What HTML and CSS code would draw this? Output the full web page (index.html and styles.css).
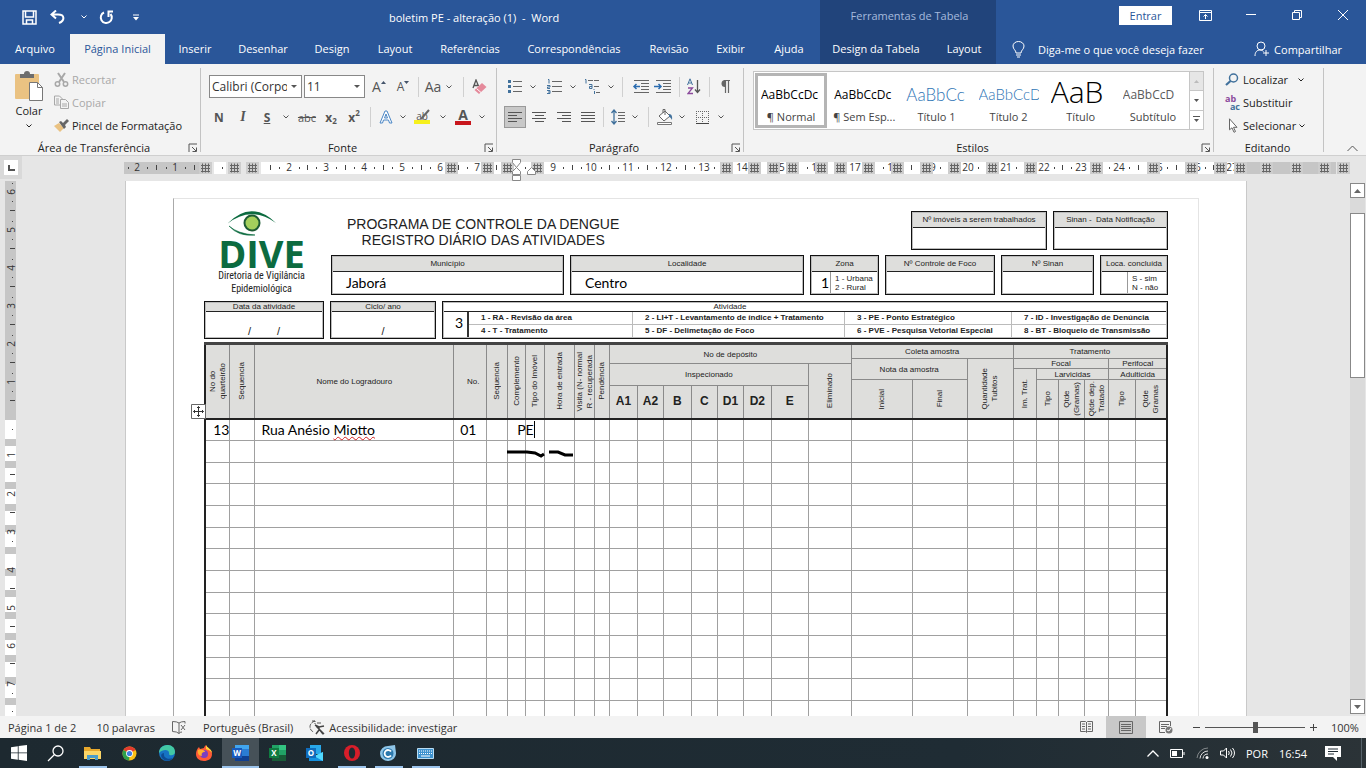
FILE: index.html
```html
<!DOCTYPE html>
<html lang="pt-BR">
<head>
    <meta charset="UTF-8">
    <meta name="viewport" content="width=device-width, initial-scale=1.0">
    <title>boletim PE - alteração (1) - Word</title>
    <link rel="stylesheet" href="styles.css">
</head>
<body>
    <svg class="defs" aria-hidden="true">
        <symbol id="chev" viewBox="0 0 6 4"><path d="M.5.5 3 3 5.5.5" fill="none" stroke="currentColor"/></symbol>
        <symbol id="launch" viewBox="0 0 10 10"><path d="M1 9V1h8M4 4l4 4M8.5 4.5v4h-4" fill="none" stroke="#555"/></symbol>
    </svg>

    <header class="titlebar">
        <div class="main-side">
            <div class="title-row">
                <div class="quick">
                    <button aria-label="Salvar"><svg width="15" height="15" viewBox="0 0 15 15"><path d="M1 1h13v13H1zM3.500 1v6h8V1M4.500 14v-4h6v4" fill="none" stroke="#fff" stroke-width="1.500"/></svg></button>
                    <button aria-label="Desfazer"><svg width="16" height="14" viewBox="0 0 16 14"><path d="M6 .5 1.500 4.500 6 8.500M2 4.500h6c7 0 7 6 1 8.500" fill="none" stroke="#fff" stroke-width="2"/></svg></button>
                    <button aria-label="Lista desfazer"><svg width="6" height="4"><use href="#chev"/></svg></button>
                    <button aria-label="Repetir"><svg width="15" height="15" viewBox="0 0 15 15"><path d="M5 2.500a5.500 5.500 0 1 0 6.500 1.500M9.500 7V1.500H14" fill="none" stroke="#fff" stroke-width="2"/></svg></button>
                    <button aria-label="Personalizar"><svg width="6" height="7" viewBox="0 0 6 7"><path d="M0 1h6" stroke="#fff"/><path d="M0 3h6L3 6.500z" fill="#fff"/></svg></button>
                </div>
                <span class="doc-title">boletim PE - alteração (1) &nbsp;- &nbsp;Word</span>
            </div>
            <nav class="tabs">
                <a href="#">Arquivo</a>
                <a href="#" class="active">Página Inicial</a>
                <a href="#">Inserir</a>
                <a href="#">Desenhar</a>
                <a href="#">Design</a>
                <a href="#">Layout</a>
                <a href="#">Referências</a>
                <a href="#">Correspondências</a>
                <a href="#">Revisão</a>
                <a href="#">Exibir</a>
                <a href="#">Ajuda</a>
            </nav>
        </div>
        <div class="context-side">
            <div class="context-title">Ferramentas de Tabela</div>
            <nav class="tabs context-tabs">
                <a href="#">Design da Tabela</a>
                <a href="#">Layout</a>
            </nav>
        </div>
        <div class="window-side">
            <div class="window-row">
                <button class="signin">Entrar</button>
                <button class="win" aria-label="Opções da faixa"><svg width="13" height="11" viewBox="0 0 13 11"><path d="M.5.5h12v10H.5zM.5 2.500h12M6.500 9V4.500M4.500 6.500l2-2 2 2" fill="none" stroke="#fff"/></svg></button>
                <button class="win" aria-label="Minimizar"><svg width="10" height="10" viewBox="0 0 10 10"><path d="M0 4.500h10" stroke="#fff"/></svg></button>
                <button class="win" aria-label="Restaurar"><svg width="10" height="10" viewBox="0 0 10 10"><path d="M.5 2.500h7v7h-7zM2.500 2.500v-2h7v7h-2" fill="none" stroke="#fff"/></svg></button>
                <button class="win" aria-label="Fechar"><svg width="10" height="10" viewBox="0 0 10 10"><path d="M0 0l10 10M10 0 0 10" stroke="#fff"/></svg></button>
            </div>
            <div class="tell-row">
                <a href="#" class="tell"><svg width="13" height="17" viewBox="0 0 13 17"><path d="M4 12c0-3-3-3.500-3-7a5.500 4.500 0 0 1 11 0c0 3.500-3 4-3 7zM4 14h5M5 16h3" fill="none" stroke="#fff"/></svg>Diga-me o que você deseja fazer</a>
                <a href="#" class="share"><svg width="16" height="16" viewBox="0 0 16 16"><path d="M1 15c0-4 2-6 5-6 1.500 0 2.500.5 3.500 1.500M12 9v6M9 12h6" fill="none" stroke="#fff"/><circle cx="7" cy="5" r="4" fill="none" stroke="#fff"/></svg>Compartilhar</a>
            </div>
        </div>
    </header>

    <section class="ribbon">
        <div class="group clipboard">
            <div class="group-body clip-body">
                <button class="paste">
                    <svg width="28" height="30" viewBox="0 0 28 30"><rect x="0" y="3" width="24" height="25" rx="1" fill="#eac282"/><path d="M5 7V3h4a3 3 0 0 1 6 0h4v4z" fill="#6d6d6d"/><path d="M14.500 11.500h8l5 5v13h-13z" fill="#fff" stroke="#777"/><path d="M22.500 11.500v5h5" fill="none" stroke="#777"/></svg>
                    <span>Colar</span>
                    <svg width="6" height="4"><use href="#chev"/></svg>
                </button>
                <div class="clip-list">
                    <button disabled><svg width="15" height="15" viewBox="0 0 15 15"><path d="M4 1l6 9M11 1 5 10" stroke="#a8a8a8" stroke-width="2"/><circle cx="3.500" cy="12" r="2.200" fill="none" stroke="#a8a8a8" stroke-width="1.500"/><circle cx="11.500" cy="12" r="2.200" fill="none" stroke="#a8a8a8" stroke-width="1.500"/></svg>Recortar</button>
                    <button disabled><svg width="15" height="15" viewBox="0 0 15 15"><path d="M6 10H.5V1h5l3 3M6.500 4.500h5l3 3v6h-8zM8 9h5M8 11h5M2 4h3M2 6h3M2 8h3" fill="none" stroke="#a8a8a8"/></svg>Copiar</button>
                    <button><svg width="15" height="15" viewBox="0 0 15 15"><path d="M0 8l5-3 5 5-4 4z" fill="#eac282"/><path d="M5 4l2-1 2 2 4-4 2 2-4 4 1 2-2 2z" fill="#666"/></svg>Pincel de Formatação</button>
                </div>
            </div>
            <div class="group-label"><span>Área de Transferência</span><button aria-label="Opções"><svg width="10" height="10"><use href="#launch"/></svg></button></div>
        </div>

        <div class="group font">
            <div class="group-body">
                <div class="tools font-top">
                    <div class="combo"><select aria-label="Fonte"><option>Calibri (Corpo)</option></select></div>
                    <div class="combo"><select aria-label="Tamanho"><option>11</option></select></div>
                    <button class="glyph" aria-label="Aumentar fonte">A<svg width="5" height="3" viewBox="0 0 5 3"><path d="M0 3h5L2.500 0z" fill="#44546a"/></svg></button>
                    <button class="glyph small" aria-label="Diminuir fonte">A<svg width="5" height="3" viewBox="0 0 5 3"><path d="M0 0h5L2.500 3z" fill="#44546a"/></svg></button>
                    <i class="sep"></i>
                    <button class="glyph">Aa</button>
                    <button aria-label="Mais"><svg width="6" height="4"><use href="#chev"/></svg></button>
                    <i class="sep"></i>
                    <button aria-label="Limpar formatação"><svg width="15" height="16" viewBox="0 0 15 16"><path d="M1 9 4 1 6.500 7M2 6.500h4" fill="none" stroke="#555" stroke-width="1.300"/><path d="M2.500 11 10 4l4.500 4-7.500 7z" fill="#e58a9b"/><path d="M4.500 9.500l4.500 4" stroke="#fff"/></svg></button>
                </div>
                <div class="tools font-bottom">
                    <button class="b">N</button>
                    <button class="i">I</button>
                    <button class="b u">S</button>
                    <button aria-label="Mais"><svg width="6" height="4"><use href="#chev"/></svg></button>
                    <button class="strike">abc</button>
                    <button class="b">x<sub>2</sub></button>
                    <button class="b">x<sup>2</sup></button>
                    <i class="sep"></i>
                    <button aria-label="Efeitos"><svg width="14" height="14" viewBox="0 0 14 14"><path d="M1 13 6 1h2l5 12h-2.500l-1-3h-5l-1 3zM5.500 8h3L7 4z" fill="#fff" stroke="#4a86c5"/></svg></button>
                    <button aria-label="Mais"><svg width="6" height="4"><use href="#chev"/></svg></button>
                    <button class="marker" aria-label="Realce">ab<svg width="16" height="17" viewBox="0 0 16 17"><path d="M7 11l8-9" stroke="#666" stroke-width="2"/><path d="M0 12h16v4H0z" fill="#f6f01c"/></svg></button>
                    <button aria-label="Mais"><svg width="6" height="4"><use href="#chev"/></svg></button>
                    <button class="color" aria-label="Cor da fonte">A</button>
                    <button aria-label="Mais"><svg width="6" height="4"><use href="#chev"/></svg></button>
                </div>
            </div>
            <div class="group-label"><span>Fonte</span><button aria-label="Opções"><svg width="10" height="10"><use href="#launch"/></svg></button></div>
        </div>

        <div class="group paragraph">
            <div class="group-body">
                <div class="tools par-top">
                    <button aria-label="Marcadores"><svg width="14" height="15" viewBox="0 0 14 15"><path d="M0 1h3v3H0zM0 6h3v3H0zM0 11h3v3H0z" fill="#41719c"/><path d="M5 2.500h9M5 7.500h9M5 12.500h9" stroke="#666"/></svg></button>
                    <button aria-label="Mais"><svg width="6" height="4"><use href="#chev"/></svg></button>
                    <button aria-label="Numeração"><svg width="15" height="17" viewBox="0 0 15 17"><path d="M1 1.500h1v4M0 7.500h3v1.500H.5v1.500H3M0 12.500h3v3H0M1 14h2" fill="none" stroke="#41719c"/><path d="M5 3.500h10M5 8.500h10M5 13.500h10" stroke="#666"/></svg></button>
                    <button aria-label="Mais"><svg width="6" height="4"><use href="#chev"/></svg></button>
                    <button aria-label="Vários níveis"><svg width="18" height="17" viewBox="0 0 18 17"><path d="M1 1.500h1v4M5 6.500h3v4H5.500v-2H8M10 11v1M10.500 13v3" fill="none" stroke="#41719c"/><path d="M4 2.500h12M10 8.500h6M12 14.500h4" stroke="#666" stroke-dasharray="5 1"/></svg></button>
                    <button aria-label="Mais"><svg width="6" height="4"><use href="#chev"/></svg></button>
                    <i class="sep"></i>
                    <button aria-label="Diminuir recuo"><svg width="17" height="13" viewBox="0 0 17 13"><path d="M2 .5h15M9 3.500h8M9 6.500h8M9 9.500h8M2 12.500h15" stroke="#666"/><path d="M8 6.500H2M4.500 4 2 6.500 4.500 9" fill="none" stroke="#2b6cb0" stroke-width="1.500"/></svg></button>
                    <button aria-label="Aumentar recuo"><svg width="17" height="13" viewBox="0 0 17 13"><path d="M2 .5h15M9 3.500h8M9 6.500h8M9 9.500h8M2 12.500h15" stroke="#666"/><path d="M0 6.500h7M4.500 4 7 6.500 4.500 9" fill="none" stroke="#2b6cb0" stroke-width="1.500"/></svg></button>
                    <i class="sep"></i>
                    <button aria-label="Classificar"><svg width="14" height="17" viewBox="0 0 14 17"><path d="M.5 7 3 .8 5.500 7M1.500 5h3" fill="none" stroke="#41719c"/><path d="M1 10h4.500L1 15.500h5" fill="none" stroke="#8b4a9c" stroke-width="1.300"/><path d="M10.500 2v12M8 11.500l2.500 3 2.500-3" fill="none" stroke="#555" stroke-width="1.300"/></svg></button>
                    <i class="sep"></i>
                    <button aria-label="Mostrar tudo"><svg width="10" height="13" viewBox="0 0 10 13"><path d="M5 0v7a3.500 3.500 0 0 1 0-7z" fill="#666"/><path d="M4 .5h6M5.500 0v13M8.500 0v13" stroke="#666" stroke-width="1.200"/></svg></button>
                </div>
                <div class="tools par-bottom">
                    <button class="pressed" aria-label="Esquerda"><svg width="14" height="11" viewBox="0 0 14 11"><path d="M0 .5h14M0 3.500h9M0 6.500h14M0 9.500h9" stroke="#555"/></svg></button>
                    <button aria-label="Centralizar"><svg width="14" height="11" viewBox="0 0 14 11"><path d="M0 .5h14M3 3.500h9M0 6.500h14M3 9.500h9" stroke="#555"/></svg></button>
                    <button aria-label="Direita"><svg width="14" height="11" viewBox="0 0 14 11"><path d="M0 .5h14M5 3.500h9M0 6.500h14M5 9.500h9" stroke="#555"/></svg></button>
                    <button aria-label="Justificar"><svg width="14" height="11" viewBox="0 0 14 11"><path d="M0 .5h14M0 3.500h14M0 6.500h14M0 9.500h14" stroke="#555"/></svg></button>
                    <i class="sep"></i>
                    <button aria-label="Espaçamento"><svg width="14" height="16" viewBox="0 0 14 16"><path d="M3 1v14M.5 4 3 1l2.500 3M.5 12 3 15l2.500-3" fill="none" stroke="#41719c" stroke-width="1.300"/><path d="M7 3.500h7M7 6.500h7M7 9.500h7M7 12.500h7" stroke="#666"/></svg></button>
                    <button aria-label="Mais"><svg width="6" height="4"><use href="#chev"/></svg></button>
                    <i class="sep"></i>
                    <button aria-label="Sombreamento"><svg width="16" height="16" viewBox="0 0 16 16"><path d="M2 7l6-5 5 5-6 5zM6 4V.5h2V6" fill="#fff" stroke="#666"/><path d="M12 5c3 0 3.500 3 3 6-1-2-2-3-3-3z" fill="#41719c"/><path d="M.5 13.500h14v2H.5z" fill="#fff" stroke="#777"/></svg></button>
                    <button aria-label="Mais"><svg width="6" height="4"><use href="#chev"/></svg></button>
                    <button aria-label="Bordas"><svg width="13" height="13" viewBox="0 0 13 13"><path d="M0 .5h13M0 6.500h13M.5 0v13M6.500 0v13M12.500 0v13" stroke="#666" stroke-dasharray="1 1"/><path d="M0 12.500h13" stroke="#444"/></svg></button>
                    <button aria-label="Mais"><svg width="6" height="4"><use href="#chev"/></svg></button>
                </div>
            </div>
            <div class="group-label"><span>Parágrafo</span><button aria-label="Opções"><svg width="10" height="10"><use href="#launch"/></svg></button></div>
        </div>

        <div class="group styles">
            <div class="group-body">
                <div class="gallery">
                    <button class="style selected"><span class="sample">AaBbCcDc</span><span>¶ Normal</span></button>
                    <button class="style"><span class="sample">AaBbCcDc</span><span>¶ Sem Esp...</span></button>
                    <button class="style"><span class="sample h1">AaBbCc</span><span>Título 1</span></button>
                    <button class="style"><span class="sample h2">AaBbCcD</span><span>Título 2</span></button>
                    <button class="style"><span class="sample big">AaB</span><span>Título</span></button>
                    <button class="style"><span class="sample sub-title">AaBbCcD</span><span>Subtítulo</span></button>
                    <div class="gallery-nav">
                        <button class="off" aria-label="Acima"><svg width="5" height="3" viewBox="0 0 5 3"><path d="M0 3h5L2.500 0z" fill="#bbb"/></svg></button>
                        <button aria-label="Abaixo"><svg width="5" height="3" viewBox="0 0 5 3"><path d="M0 0h5L2.500 3z" fill="#555"/></svg></button>
                        <button aria-label="Mais estilos"><svg width="7" height="7" viewBox="0 0 7 7"><path d="M0 .5h7" stroke="#555"/><path d="M1 3h5L3.500 6z" fill="#555"/></svg></button>
                    </div>
                </div>
            </div>
            <div class="group-label"><span>Estilos</span><button aria-label="Opções"><svg width="10" height="10"><use href="#launch"/></svg></button></div>
        </div>

        <div class="group editing">
            <div class="group-body edit-list">
                <button><svg width="15" height="13" viewBox="0 0 15 13"><circle cx="8.500" cy="5" r="4" fill="none" stroke="#41719c" stroke-width="1.500"/><path d="M5.500 8 1 12" stroke="#41719c" stroke-width="2.200"/></svg>Localizar<svg class="arrow" width="6" height="4"><use href="#chev"/></svg></button>
                <button><span class="replace"><b>ab</b><em>ac</em></span>Substituir</button>
                <button><svg width="15" height="15" viewBox="0 0 15 15"><path d="M4.500.8v11l2.500-2 2 4.500 1.500-.8-2-4.200h3.500z" fill="#fff" stroke="#666"/></svg>Selecionar<svg class="arrow near" width="6" height="4"><use href="#chev"/></svg></button>
            </div>
            <div class="group-label"><span>Editando</span></div>
        </div>
        <button class="collapse" aria-label="Recolher"><svg width="11" height="7" viewBox="0 0 11 7"><path d="M.5 6 5.500 1l5 5" fill="none" stroke="#555"/></svg></button>
    </section>

    <div class="ruler-row">
        <button class="corner" aria-label="Tabulação"><svg width="7" height="6" viewBox="0 0 7 6"><path d="M1 0v5h6" fill="none" stroke="#555" stroke-width="2"/></svg></button>
        <svg id="hruler" width="1344" height="25" viewBox="22 0 1344 25"></svg>
    </div>

    <main class="workspace">
        <svg id="vruler" width="17" height="535" viewBox="0 0 17 535"></svg>
        <div class="canvas">
            <div class="page">
                <div class="form">
                    <div class="form-head">
                        <div class="logo">
                            <svg width="50" height="26" viewBox="0 0 50 26"><path d="M0 13Q24-12 49 12 24-6 0 13z" fill="#0c6b40"/><path d="M2 15q9 8 26 9Q12 26 2 15z" fill="#0c6b40" stroke="#0c6b40" stroke-width=".6"/><circle cx="25" cy="12" r="8.500" fill="#1d5b33"/><circle cx="25" cy="12" r="6.500" fill="#a4d05c"/></svg>
                            <strong>DIVE</strong>
                            <span>Diretoria de Vigilância</span>
                            <span>Epidemiológica</span>
                        </div>
                        <div class="head-right">
                            <div class="head-top">
                                <h1>PROGRAMA DE CONTROLE DA DENGUE<br>REGISTRO DIÁRIO DAS ATIVIDADES</h1>
                                <div class="box"><h2>Nº imóveis a serem trabalhados</h2><p></p></div>
                                <div class="box"><h2>Sinan - &nbsp;Data Notificação</h2><p></p></div>
                            </div>
                            <div class="head-fields">
                                <div class="box"><h2>Município</h2><p class="typed">Jaborá</p></div>
                                <div class="box"><h2>Localidade</h2><p class="typed">Centro</p></div>
                                <div class="box"><h2>Zona</h2><div class="split"><p class="typed">1</p><small>1 - Urbana<br>2 - Rural</small></div></div>
                                <div class="box"><h2>Nº Controle de Foco</h2><p></p></div>
                                <div class="box"><h2>Nº Sinan</h2><p></p></div>
                                <div class="box"><h2>Loca. concluída</h2><div class="split"><p></p><small>S - sim<br>N - não</small></div></div>
                            </div>
                        </div>
                    </div>
                    <div class="head-bottom">
                        <div class="box low"><h2>Data da atividade</h2><p class="slashes"><span>/</span><span>/</span></p></div>
                        <div class="box low"><h2>Ciclo/ ano</h2><p class="slashes"><span>/</span></p></div>
                        <div class="box low activity">
                            <h2>Atividade</h2>
                            <div class="activity-body">
                                <p class="typed">3</p>
                                <ul>
                                    <li>1 - RA - Revisão da área</li>
                                    <li>2 - LI+T - Levantamento de índice + Tratamento</li>
                                    <li>3 - PE - Ponto Estratégico</li>
                                    <li>7 - ID - Investigação de Denúncia</li>
                                    <li>4 - T - Tratamento</li>
                                    <li>5 - DF - Delimetação de Foco</li>
                                    <li>6 - PVE - Pesquisa Vetorial Especial</li>
                                    <li>8 - BT - Bloqueio de Transmissão</li>
                                </ul>
                            </div>
                        </div>
                    </div>

                    <div class="sheet">
                        <svg class="handle" width="15" height="15" viewBox="0 0 15 15"><path d="M.5.5h14v14H.5z" fill="#fff" stroke="#666"/><path d="M7.500 2.500v10M2.500 7.500h10M6 4l1.500-1.500L9 4M6 11l1.500 1.500L9 11M4 6 2.500 7.500 4 9M11 6l1.500 1.500L11 9" fill="none" stroke="#333"/></svg>
                        <table>
                            <colgroup id="cols"></colgroup>
                            <thead>
                                <tr class="r1">
                                    <th rowspan="6"><span class="v">No do<br>quarteirão</span></th>
                                    <th rowspan="6"><span class="v">Sequencia</span></th>
                                    <th rowspan="6">Nome do Logradouro</th>
                                    <th rowspan="6" class="num">No.</th>
                                    <th rowspan="6"><span class="v">Sequencia</span></th>
                                    <th rowspan="6"><span class="v">Complemento</span></th>
                                    <th rowspan="6"><span class="v">Tipo do Imóvel</span></th>
                                    <th rowspan="6"><span class="v">Hora de entrada</span></th>
                                    <th rowspan="6"><span class="v">Visita (N- normal<br>R - recuperada</span></th>
                                    <th rowspan="6"><span class="v">Pendência</span></th>
                                    <th rowspan="2" colspan="8">No de depósito</th>
                                    <th colspan="3">Coleta amostra</th>
                                    <th colspan="6">Tratamento</th>
                                </tr>
                                <tr class="r2">
                                    <th rowspan="3" colspan="2">Nota da amostra</th>
                                    <th rowspan="5"><span class="v">Quantidade<br>Tubitos</span></th>
                                    <th rowspan="2" colspan="4">Focal</th>
                                    <th rowspan="2" colspan="2">Perifocal</th>
                                </tr>
                                <tr class="r3">
                                    <th rowspan="3" colspan="7">Inspecionado</th>
                                    <th rowspan="4"><span class="v">Eliminado</span></th>
                                </tr>
                                <tr class="r4">
                                    <th rowspan="3"><span class="v">Im. Trat.</span></th>
                                    <th colspan="3">Larvicidas</th>
                                    <th colspan="2">Adulticida</th>
                                </tr>
                                <tr class="r5">
                                    <th rowspan="2"><span class="v">Inicial</span></th>
                                    <th rowspan="2"><span class="v">Final</span></th>
                                    <th rowspan="2"><span class="v">Tipo</span></th>
                                    <th rowspan="2"><span class="v">Qtde<br>(Gramas)</span></th>
                                    <th rowspan="2"><span class="v">Qtde dep.<br>Tratado</span></th>
                                    <th rowspan="2"><span class="v">Tipo</span></th>
                                    <th rowspan="2"><span class="v">Qtde<br>Gramas</span></th>
                                </tr>
                                <tr class="r6">
                                    <th>A1</th><th>A2</th><th>B</th><th>C</th><th>D1</th><th>D2</th><th>E</th>
                                </tr>
                            </thead>
                            <tbody id="rows">
                                <tr>
                                    <td class="right">13</td><td></td>
                                    <td>Rua Anésio <span class="typo">Miotto</span></td>
                                    <td>01</td><td></td>
                                    <td class="current"><span class="caret">PE</span>
                                        <svg class="ink" width="70" height="10" viewBox="0 0 70 10"><path d="M1 3h20l8 1 6 3 3-2M43 3h9l7 3h8" fill="none" stroke="#000" stroke-width="3"/></svg>
                                    </td>
                                </tr>
                            </tbody>
                        </table>
                    </div>
                </div>
            </div>
        </div>
        <div class="scroll">
            <button aria-label="Rolar acima"><svg width="7" height="4" viewBox="0 0 7 4"><path d="M0 4h7L3.500 0z" fill="#666"/></svg></button>
            <div class="track"><div class="thumb"></div></div>
            <button aria-label="Rolar abaixo"><svg width="7" height="4" viewBox="0 0 7 4"><path d="M0 0h7L3.500 4z" fill="#666"/></svg></button>
        </div>
    </main>

    <footer class="status">
        <span class="pages">Página 1 de 2</span>
        <span class="words">10 palavras</span>
        <svg class="proof" width="15" height="13" viewBox="0 0 15 13"><path d="M7 12.500V2Q5 .5.5.5v10q4.500 0 6.500 2 1-1.500 3-1.500M7 2Q9 .5 13 .5v2M9 4l4 5M13 4 9 9" fill="none" stroke="#666"/></svg>
        <span class="lang">Português (Brasil)</span>
        <svg width="17" height="15" viewBox="0 0 17 15"><path d="M6 1C-1 3 0 11 5 12M3 1h3v3M8 3h4" fill="none" stroke="#555" stroke-dasharray="4 1"/><path d="M6 5l4 2 5-1M10 7v3l-3 4M10 9l4 5M7 6l8 8" fill="none" stroke="#444" stroke-width="1.500"/></svg>
        <span class="access">Acessibilidade: investigar</span>
        <div class="views">
            <button aria-label="Leitura"><svg width="13" height="12" viewBox="0 0 13 12"><path d="M.5.5h5l1 1 1-1h5v10h-5l-1 1-1-1h-5zM6.500 1v10M2 3h3M2 5.500h3M2 8h3M8 3h3M8 5.500h3M8 8h3" fill="none" stroke="#666"/></svg></button>
            <button class="on" aria-label="Impressão"><svg width="14" height="13" viewBox="0 0 14 13"><path d="M.5.5h13v12H.5zM2 3.500h10M2 5.500h10M2 7.500h10M2 9.500h10" fill="none" stroke="#666"/></svg></button>
            <button aria-label="Web"><svg width="14" height="13" viewBox="0 0 14 13"><path d="M6 11.500H.5v-11h11V5M2 3.500h8M2 5.500h6M2 7.500h4" fill="none" stroke="#666"/><circle cx="10" cy="9" r="3.500" fill="#777"/><path d="M8 9l2 1 2-3" stroke="#fff" fill="none"/></svg></button>
        </div>
        <button class="step" aria-label="Menos zoom"><svg width="9" height="9" viewBox="0 0 9 9"><path d="M1 4.500h7" stroke="#444"/></svg></button>
        <input type="range" min="0" max="100" value="50" aria-label="Zoom">
        <button class="step" aria-label="Mais zoom"><svg width="9" height="9" viewBox="0 0 9 9"><path d="M1 4.500h7M4.500 1v7" stroke="#444"/></svg></button>
        <span class="percent">100%</span>
    </footer>

    <footer class="taskbar">
        <button aria-label="Iniciar"><svg width="16" height="16" viewBox="0 0 16 16"><path d="M0 2.200 6.800 1.200v6.300H0zM7.600 1.100 16 0v7.500H7.600zM0 8.300h6.800v6.400L0 13.700zM7.600 8.300H16V16l-8.400-1.200z" fill="#fff"/></svg></button>
        <button aria-label="Pesquisar"><svg width="17" height="17" viewBox="0 0 17 17"><circle cx="11" cy="6" r="5" fill="none" stroke="#fff" stroke-width="1.300"/><path d="M7.500 9.500 1 16" stroke="#fff" stroke-width="1.300"/></svg></button>
        <button class="open" aria-label="Explorador"><svg width="17" height="15" viewBox="0 0 17 15"><path d="M0 1h6l1 2h9v10H0z" fill="#e8a92c"/><path d="M0 5h17v8H0z" fill="#fbd667"/><path d="M3 14V9h11v5h-3v-2H6v2z" fill="#4b9cc9"/></svg></button>
        <button aria-label="Chrome"><svg width="15" height="15" viewBox="0 0 15 15"><circle cx="7.500" cy="7.500" r="7" fill="#fbc116"/><path d="M7.500 7.500 1.400 4A7 7 0 0 1 13.600 4z" fill="#e33b2e"/><path d="M7.500 7.500 1.400 4a7 7 0 0 0 5.800 10.500z" fill="#2ea04c"/><circle cx="7.500" cy="7.500" r="3.400" fill="#fff"/><circle cx="7.500" cy="7.500" r="2.600" fill="#3f80e0"/></svg></button>
        <button aria-label="Edge"><svg width="16" height="16" viewBox="0 0 16 16"><circle cx="8" cy="8" r="8" fill="#1673c4"/><path d="M0 8C0-2 16-3 16 7c0 4-6 4-6 2 1-4-5-6-10-1z" fill="#43c8a4"/><path d="M5 8c-1 5 4 7 9 5-3 4-9 3-11 0S3 8 5 8z" fill="#0d4c94"/></svg></button>
        <button aria-label="Firefox"><svg width="16" height="16" viewBox="0 0 16 16"><path d="M8 16C3 16 0 13 0 9c0-3 1-5 3-7l1 2 4-1c0-1 1-2 2-3 1 3 6 4 6 9s-4 7-8 7z" fill="#ff5a36"/><path d="M10 0c1 3 6 4 6 8-2-3-4-3-6-4z" fill="#ffd43c"/><circle cx="8" cy="9" r="4" fill="#7b3fc0"/><path d="M2 5c3-1 7 0 7 2-3 0-4 2-3 4-3 0-5-3-4-6z" fill="#ffb02e"/></svg></button>
        <button class="open focus" aria-label="Word"><svg width="17" height="16" viewBox="0 0 17 16"><path d="M3 0h14v16H3z" fill="#2b7cd3"/><path d="M3 0h14v4H3z" fill="#41a5ee"/><path d="M3 11h14v5H3z" fill="#103f91"/><path d="M0 3h10v10H0z" fill="#185abd"/><text x="5" y="11" class="app">W</text></svg></button>
        <button aria-label="Excel"><svg width="17" height="16" viewBox="0 0 17 16"><path d="M3 0h14v16H3z" fill="#21a366"/><path d="M10 0h7v5h-7z" fill="#33c481"/><path d="M3 10h14v6H3z" fill="#185c37"/><path d="M0 3h10v10H0z" fill="#107c41"/><text x="5" y="11" class="app">X</text></svg></button>
        <button aria-label="Outlook"><svg width="17" height="16" viewBox="0 0 17 16"><path d="M4 0h11v9H4z" fill="#28a8ea"/><path d="M3 7l7 4 7-4v9H3z" fill="#1490df"/><path d="M17 7v9L8 11z" fill="#50d9ff"/><path d="M0 3h10v10H0z" fill="#0f6cbd"/><text x="5" y="11" class="app">O</text></svg></button>
        <button class="open" aria-label="Opera"><svg width="16" height="16" viewBox="0 0 16 16"><circle cx="8" cy="8" r="8" fill="#d81e2a"/><ellipse cx="8" cy="8" rx="3.200" ry="5.500" fill="#1f2b33"/></svg></button>
        <button class="open" aria-label="Navegador"><svg width="17" height="16" viewBox="0 0 17 16"><path d="M8 1 15 0l1 8a8 7.500 0 1 1-8-7z" fill="#8ec5e8"/><circle cx="8" cy="8.500" r="5.500" fill="#2d79ad"/><path d="M11 6.500a3.500 3.500 0 1 0 0 4" fill="none" stroke="#fff" stroke-width="1.800"/></svg></button>
        <button class="open" aria-label="Teclado"><svg width="17" height="11" viewBox="0 0 17 11"><path d="M.5.5h16v10H.5z" fill="#3f93cf" stroke="#b9ddf3"/><path d="M2 3h13M2 5.500h13" stroke="#fff" stroke-dasharray="1 1"/><path d="M4 8h9" stroke="#fff"/></svg></button>
        <div class="tray">
            <svg width="12" height="7" viewBox="0 0 12 7"><path d="M.5 6.500 6 1l5.500 5.500" fill="none" stroke="#fff" stroke-width="1.300"/></svg>
            <svg width="15" height="9" viewBox="0 0 15 9"><path d="M.5.5h12v8H.5zM14 3v3" fill="none" stroke="#fff"/><path d="M2 2h5v5H2z" fill="#fff"/></svg>
            <svg width="13" height="12" viewBox="0 0 13 12"><g fill="none" stroke="#ddd"><path d="M1 11A11 11 0 0 1 12 1" opacity=".5"/><path d="M4 11.500A8 8 0 0 1 12 4M7 11.500A5 5 0 0 1 12 7"/></g><circle cx="11" cy="10.500" r="1.500" fill="#fff"/></svg>
            <svg width="15" height="12" viewBox="0 0 15 12"><path d="M.5 4h3l3-3v10l-3-3h-3zM8.500 4q1.500 2 0 4M10.500 2.500q3 3.500 0 7M12.500 1q4 5 0 10" fill="none" stroke="#fff"/></svg>
            <span>POR</span>
            <span class="clock">16:54</span>
            <svg width="16" height="15" viewBox="0 0 16 15"><path d="M0 0h16v11h-4v4l-4-4H0z" fill="#fff"/><path d="M3 3h10M3 5.500h10M3 8h6" stroke="#1f2b33"/></svg>
        </div>
    </footer>

    <script src="script.js"></script>
</body>
</html>
```
FILE: styles.css
```css
* {
    box-sizing: border-box;
}

body {
    margin: 0;
    height: 100vh;
    display: flex;
    flex-direction: column;
    overflow: hidden;
    font-family: "Open Sans", "Noto Sans", sans-serif;
    font-size: 11px;
    color: #333;
    background: #e6e6e6;
}

button {
    font: inherit;
    color: inherit;
    background: none;
    border: 0;
    padding: 0;
    display: flex;
    align-items: center;
    justify-content: center;
}

a {
    color: inherit;
    text-decoration: none;
}

svg {
    flex: none;
    display: block;
}

.defs {
    position: absolute;
    width: 0;
    height: 0;
}

/* title bar */
.titlebar {
    display: flex;
    height: 64px;
    flex: none;
    background: #2a5699;
    color: #fff;
}

.main-side {
    flex: 0 0 820px;
}

.title-row {
    height: 34px;
    display: flex;
    align-items: center;
}

.quick {
    display: grid;
    grid-template-columns: 22px 36px 16px 28px 32px;
    padding-left: 18px;
    width: 389px;
}

.doc-title {
    white-space: nowrap;
}

.tabs {
    height: 30px;
    display: grid;
    grid-template-columns: 70px 95px 60px 76px 62px 64px 86px 122px 68px 55px 62px;
    line-height: 30px;
    text-align: center;
}

.tabs .active {
    background: #f3f3f3;
    color: #2a5699;
}

.context-side {
    flex: 0 0 176px;
    background: #21447b;
}

.context-title {
    height: 34px;
    line-height: 32px;
    text-align: center;
    color: #a6bbdd;
    padding-left: 3px;
}

.context-tabs {
    grid-template-columns: 112px 64px;
}

.window-side {
    flex: 1;
}

.window-row {
    height: 34px;
    display: flex;
    justify-content: flex-end;
}

.window-row .win {
    width: 46px;
    height: 30px;
}

.window-row .signin {
    width: 53px;
    height: 19px;
    margin: 6px 10px 0 0;
    background: #fff;
    color: #2a5699;
}

.tell-row {
    height: 30px;
    display: flex;
    align-items: center;
    justify-content: space-between;
    padding: 0 24px 0 16px;
}

.tell, .share {
    display: flex;
    align-items: center;
    gap: 13px;
}

.share {
    gap: 4px;
}

/* ribbon */
.ribbon {
    display: flex;
    flex: none;
    height: 92px;
    background: #f3f3f3;
    border-bottom: 1px solid #cfcfcf;
}

.group {
    display: flex;
    flex-direction: column;
    height: 84px;
    margin-top: 4px;
    border-right: 1px solid #c3c3c3;
    color: #222;
}

.group-body {
    flex: 1;
}

.group-label {
    height: 8px;
    display: flex;
    align-items: center;
    text-align: center;
    padding-right: 2px;
}

.group-label span {
    flex: 1;
    line-height: 8px;
}

.clipboard {
    width: 201px;
}

.font {
    width: 296px;
}

.paragraph {
    width: 247px;
}

.styles {
    width: 470px;
}

.editing {
    width: 110px;
}

.clip-body {
    display: flex;
}

.paste {
    width: 58px;
    flex-direction: column;
    justify-content: flex-start;
    padding-top: 3px;
}

.paste span {
    line-height: 20px;
}

.paste svg:last-child {
    margin-top: 3px;
}

.clip-list {
    margin-left: -4px;
}

.clip-list button, .edit-list button {
    height: 23px;
    gap: 3px;
}

.clip-list button:disabled {
    color: #a8a8a8;
}

.tools {
    display: grid;
    align-items: center;
    color: #555;
}

.font-top {
    height: 35px;
    padding: 2px 0 0 8px;
    grid-template-columns: 95px 61px 28px 20px 10px 20px 12px 16px 16px;
}

.font-bottom {
    height: 28px;
    padding-left: 8px;
    grid-template-columns: 20px 28px 20px 18px 24px 24px 22px 10px 22px 12px 28px 12px 28px 10px;
}

.par-top {
    height: 35px;
    padding: 2px 0 0 7px;
    grid-template-columns: 22px 14px 28px 10px 30px 6px 16px 20px 24px 10px 20px 10px 22px;
}

.par-bottom {
    height: 28px;
    padding-left: 7px;
    grid-template-columns: 22px 26px 24px 24px 6px 24px 10px 16px 18px 16px 24px 14px;
}

.tools button {
    height: 22px;
}

.tools .pressed {
    background: #c8c8c8;
    border: 1px solid #999;
}

.sep {
    justify-self: center;
    width: 1px;
    height: 20px;
    background: #d0d0d0;
}

.combo {
    position: relative;
    height: 23px;
    border: 1px solid #888;
    background: #fff;
    margin-right: 2px;
}

.combo + .combo {
    margin-right: 0;
}

.combo::after {
    content: "";
    position: absolute;
    right: 4px;
    top: 9px;
    border: 3px solid transparent;
    border-top-color: #555;
}

.combo select {
    width: 100%;
    height: 21px;
    padding: 0 14px 0 2px;
    border: 0;
    appearance: none;
    background: transparent;
    font: inherit;
    font-size: 12px;
    color: #333;
}

.glyph {
    font-size: 14px;
}

.glyph svg {
    margin-bottom: 9px;
}

.glyph.small {
    font-size: 12px;
}

.b {
    font-weight: bold;
    font-size: 12px;
}

.i {
    font: italic bold 14px "Liberation Serif", serif;
}

.u {
    text-decoration: underline;
}

.strike {
    text-decoration: line-through;
}

sub, sup {
    font-size: 8px;
    line-height: 0;
}

sup {
    margin-bottom: 8px;
}

sub {
    margin-top: 8px;
}

.marker svg {
    margin-left: -14px;
}

.marker {
    font-size: 10px;
    padding-bottom: 2px;
}

.tools .color {
    width: 16px;
    height: 16px;
    justify-self: center;
    font-size: 14px;
    line-height: 12px;
    font-weight: bold;
    border-bottom: 4px solid #c8161d;
}

.gallery {
    display: flex;
    margin: 3px 9px 0;
    height: 59px;
    background: #fff;
    border: 1px solid #c6c6c6;
}

.style {
    flex: 1;
    min-width: 0;
    flex-direction: column;
    justify-content: flex-end;
    color: #444;
    padding: 0 6px 4px;
    line-height: 16px;
    white-space: nowrap;
}

.style.selected {
    border: 3px solid #b5b5b5;
    margin: 1px;
    padding: 0 3px;
}

.sample {
    width: 100%;
    height: 29px;
    line-height: 29px;
    overflow: hidden;
    text-align: left;
    font-size: 12px;
    color: #000;
}

.h1 {
    font-family: Lato, sans-serif;
    font-weight: 300;
    font-size: 17px;
    color: #2e74b5;
}

.h2 {
    font-family: Lato, sans-serif;
    font-weight: 300;
    font-size: 15px;
    color: #2e74b5;
}

.big {
    font-weight: 300;
    font-size: 30px;
    line-height: 24px;
}

.sub-title {
    color: #5a5a5a;
}

.gallery-nav {
    width: 14px;
    border-left: 1px solid #c6c6c6;
    display: flex;
    flex-direction: column;
}

.gallery-nav button {
    flex: 1;
    border-bottom: 1px solid #c6c6c6;
}

.gallery-nav button:last-child {
    border-bottom: 0;
}

.gallery-nav .off {
    background: #e6e6e6;
}

.edit-list {
    padding-left: 11px;
}

.edit-list .arrow {
    margin-left: 7px;
}

.edit-list .near {
    margin-left: 0;
}

.replace {
    width: 15px;
    line-height: 8px;
    font-size: 9px;
    text-align: left;
}

.replace b {
    display: block;
    color: #8b4a9c;
}

.replace em {
    display: block;
    font-style: normal;
    font-weight: bold;
    text-align: right;
    color: #41719c;
}

.collapse {
    align-self: flex-end;
    margin: 0 8px 3px auto;
}

/* rulers */
.ruler-row {
    display: flex;
    flex: none;
    height: 25px;
    overflow: hidden;
}

.corner {
    width: 22px;
    height: 23px;
    background: #fff;
    border: 4px solid #d9d9d9;
}

#hruler text, #vruler text {
    font-size: 10px;
    text-anchor: middle;
    fill: #333;
}

/* document */
.workspace {
    display: flex;
    flex: 1;
    min-height: 0;
    overflow: hidden;
}

.canvas {
    flex: 1;
    padding: 0 103px 0 108px;
}

.page {
    background: #fff;
    border-left: 1px solid #c9c9c9;
    border-right: 1px solid #c9c9c9;
    padding: 17px 47px 0;
}

.form {
    border: 1px solid #e4e4e4;
    border-left-color: #aaa;
    padding: 12px 30px 0;
    font-family: "Liberation Sans", Arial, sans-serif;
    font-size: 8px;
    color: #222;
}

.form-head {
    display: grid;
    grid-template-columns: 127px 1fr;
}

.logo {
    width: 115px;
    height: 83px;
    display: flex;
    flex-direction: column;
    align-items: center;
    white-space: nowrap;
    font: 10px/13px "Liberation Sans Narrow", "Roboto Condensed", sans-serif;
    color: #222;
}

.logo svg {
    margin-right: 20px;
}

.logo strong {
    font: bold 38px/32px "Open Sans", sans-serif;
    color: #0c6b40;
}

.head-top {
    display: grid;
    grid-template-columns: 1fr 136px 115px;
    gap: 6px;
    height: 39px;
}

.head-top h1 {
    margin: 5px 0 0 16px;
    font-size: 14px;
    line-height: 16px;
    font-weight: normal;
    justify-self: start;
    text-align: center;
}

.head-fields {
    display: grid;
    grid-template-columns: 233fr 234fr 69fr 110fr 93fr 68fr;
    gap: 6px;
    height: 39px;
    margin-top: 5px;
}

.head-bottom {
    display: grid;
    grid-template-columns: 120fr 106fr 726fr;
    gap: 6px;
    height: 37px;
    margin-top: 7px;
}

.box {
    display: flex;
    flex-direction: column;
    min-width: 0;
    border: 1px solid #111;
    outline: 1px solid #bbb;
    outline-offset: -2px;
}

.box h2 {
    margin: 0;
    height: 16px;
    line-height: 15px;
    flex: none;
    font-size: 8px;
    font-weight: normal;
    text-align: center;
    white-space: nowrap;
    background: #dededc;
    border-bottom: 1px solid #222;
}

.box.low h2 {
    height: 10px;
    line-height: 9px;
}

.box p {
    margin: 0;
}

.box .typed {
    font: 14px/22px Lato, sans-serif;
    color: #000;
    padding-left: 14px;
}

.split {
    display: grid;
    grid-template-columns: 1fr 48px;
    flex: 1;
}

.box:last-child .split {
    grid-template-columns: 1fr 40px;
}

.split small {
    font-size: 8px;
    line-height: 9px;
    padding: 2px 0 0 4px;
    border-left: 1px solid #999;
}

.box .split .typed {
    padding-left: 10px;
}

.box .slashes {
    flex: 1;
    display: flex;
    justify-content: center;
    align-items: flex-end;
    gap: 26px;
    font-size: 11px;
    line-height: 14px;
}

.box.activity h2 {
    background: #fff;
    padding-right: 150px;
}

.activity-body {
    display: flex;
    flex: 1;
}

.activity-body .typed {
    width: 26px;
    padding-left: 12px;
    border-right: 2px solid #333;
}

.activity-body ul {
    flex: 1;
    margin: 0;
    padding: 0;
    list-style: none;
    display: grid;
    grid-template-columns: 164fr 212fr 167fr 155fr;
    grid-template-rows: 1fr 1fr;
    font-weight: bold;
    line-height: 12px;
    white-space: nowrap;
}

.activity-body li {
    padding-left: 12px;
    border-right: 1px solid #bbb;
    border-bottom: 1px solid #bbb;
}

.activity-body li:nth-child(4n) {
    border-right: 0;
}

.activity-body li:nth-child(n+5) {
    border-bottom: 0;
}

.sheet {
    position: relative;
    margin-top: 4px;
}

.handle {
    position: absolute;
    left: -13px;
    top: 62px;
}

table {
    width: 100%;
    table-layout: fixed;
    border-collapse: collapse;
    border: 2px solid #222;
    border-top: 3px solid #444;
}

th {
    padding: 0;
    font-weight: normal;
    line-height: 9px;
    background: #dededc;
    border: 1px solid #8a8a8a;
    white-space: nowrap;
}

thead {
    border-bottom: 2px solid #222;
}

.num {
    padding-left: 6px;
}

.r1 { height: 15px; }
.r2 { height: 5px; }
.r3 { height: 5px; }
.r4 { height: 11px; }
.r5 { height: 6px; }
.r6 { height: 33px; }

.r6 th {
    font-size: 12px;
    font-weight: bold;
}

.v {
    display: inline-block;
    writing-mode: vertical-rl;
    transform: rotate(180deg);
    line-height: 10px;
    vertical-align: middle;
    text-align: center;
}

td {
    height: 22px;
    padding: 0 0 0 6px;
    border: 1px solid #a0a0a0;
    font: 14px/19px Lato, sans-serif;
    color: #000;
    white-space: nowrap;
}

tr:nth-child(3n) td {
    height: 21px;
}

td.right {
    padding: 0;
    text-align: right;
}

.typo {
    text-decoration: underline wavy #d02020 1px;
}

td.current {
    position: relative;
    padding-left: 9px;
}

.caret {
    border-right: 1px solid #000;
}

.ink {
    position: absolute;
    left: -2px;
    top: 29px;
    z-index: 1;
}

.scroll {
    width: 16px;
    margin-top: 2px;
    display: flex;
    flex-direction: column;
    padding-bottom: 2px;
}

.scroll button {
    width: 15px;
    height: 15px;
    background: #fff;
    border: 1px solid #888;
}

.track {
    flex: 1;
    width: 15px;
    padding-top: 15px;
    background: #dadada;
}

.thumb {
    height: 34%;
    background: #fff;
    border: 1px solid #888;
}

/* status bar */
.status {
    display: flex;
    flex: none;
    align-items: center;
    height: 22px;
    background: #f3f3f3;
    white-space: nowrap;
    padding-left: 8px;
}

.words {
    margin-left: 20px;
}

.proof {
    margin: 0 16px 0 17px;
}

.lang {
    margin-right: 16px;
}

.access {
    margin-left: 3px;
}

.views {
    display: flex;
    margin-left: auto;
    margin-right: 4px;
}

.views button {
    width: 40px;
    height: 22px;
}

.views .on {
    background: #c8c8c8;
}

.step {
    width: 13px;
}

.status input {
    appearance: none;
    width: 100px;
    height: 11px;
    margin: 0 2px;
    background: linear-gradient(#555, #555) center / 100% 1px no-repeat;
}

.status input::-webkit-slider-thumb {
    appearance: none;
    width: 5px;
    height: 11px;
    background: #555;
}

.percent {
    width: 46px;
    padding-left: 11px;
}

/* taskbar */
.taskbar {
    display: flex;
    flex: none;
    height: 30px;
    background: linear-gradient(90deg, #1d2930, #1f2c34 70%, #2b3337);
    color: #fff;
}

.taskbar button {
    width: 37px;
    height: 30px;
}

.taskbar .open {
    background: linear-gradient(#9cc4ec, #9cc4ec) bottom / 28px 2px no-repeat;
}

.taskbar .focus {
    background: linear-gradient(#9cc4ec, #9cc4ec) bottom / 100% 2px no-repeat #465158;
}

.app {
    font: bold 8px "Open Sans", sans-serif;
    text-anchor: middle;
    fill: #fff;
}

.tray {
    margin-left: auto;
    display: flex;
    align-items: center;
    gap: 11px;
    margin-right: 4px;
    padding-right: 20px;
    border-right: 1px solid #56626a;
}

.clock {
    margin-right: 7px;
}
```
FILE: script.js
```js
const NS = 'http://www.w3.org/2000/svg';

function add(parent, name, attrs, text) {
    const el = document.createElementNS(NS, name);
    for (const key in attrs) el.setAttribute(key, attrs[key]);
    if (text !== undefined) el.textContent = text;
    parent.appendChild(el);
}

function rect(svg, x, y, width, height, fill) {
    add(svg, 'rect', { x, y, width, height, fill });
}

// horizontal ruler, 38px per centimetre
const h = document.getElementById('hruler');
rect(h, 124, 6, 88, 12, '#c6c6c6');
rect(h, 214, 6, 12, 12, '#fff');
rect(h, 261, 6, 984, 12, '#fff');
rect(h, 1247, 6, 89, 12, '#c6c6c6');

[[137, 2], [175, 1]].forEach(([x, n]) => {
    add(h, 'text', { x, y: 15 }, n);
    rect(h, x - 9, 11, 1, 2, '#444');
    rect(h, x + 10, 11, 1, 2, '#444');
    rect(h, x + 19, 9, 1, 5, '#444');
});
rect(h, 222, 11, 1, 2, '#444');

for (let n = 2; n <= 27; n++) {
    const x = Math.round(213 + 37.75 * n);
    if (x > 1240) break;
    // 8 sits under the indent markers
    if (n !== 8) add(h, 'text', { x, y: 15 }, n);
    rect(h, x - 19, 9, 1, 5, '#444');
    rect(h, x - 10, 11, 1, 2, '#444');
    rect(h, x + 10, 11, 1, 2, '#444');
}

// column markers
[205, 234, 252, 451, 487, 507, 537, 726, 754, 773, 792, 821, 840, 868, 897, 926, 954,
    992, 1030, 1096, 1153, 1191, 1220, 1240, 1266, 1296, 1324, 1343].forEach(x => {
    rect(h, x - 6, 6, 13, 12, '#cdcdcd');
    add(h, 'path', { d: `M${x - 2.5} 7.5v9m3-9v9m3-9v9M${x - 4} 9.5h9m-9 3h9m-9 3h9`, stroke: '#666', fill: 'none' });
});

// indent markers
add(h, 'path', { d: 'M512.5 3.500h8v3l-4 5-4-5zM512.5 18.500v-3l4-4 4 4v3zM512.5 19.500h8v5h-8zM527.5 18.500v-3l4-4 4 4v3z', fill: '#fff', stroke: '#888' });

// vertical ruler
const v = document.getElementById('vruler');
rect(v, 5, 0, 11, 239, '#c6c6c6');
rect(v, 5, 239, 11, 296, '#fff');
for (let y = 258; y < 530; y += 21.6) rect(v, 5, Math.round(y), 11, 7, '#c6c6c6');

function vnum(y, n) {
    add(v, 'text', { x: 0, y: 0, transform: `translate(15 ${y}) rotate(-90)` }, n);
}

[6, 5, 4, 3, 2, 1].forEach((n, i) => {
    const y = 11 + i * 38;
    vnum(y, n);
    rect(v, 12, y - 9, 1, 1, '#444');
    rect(v, 12, y + 9, 1, 1, '#444');
    rect(v, 10, y + 18, 5, 1, '#444');
});
[274, 313, 351, 389, 427, 465, 503].forEach((y, i) => vnum(y, i + 1));
[293, 331, 407, 445, 482].forEach(y => rect(v, 10, y, 5, 1, '#444'));
[248, 360, 512, 530].forEach(y => rect(v, 12, y, 1, 1, '#444'));

// table columns and blank rows
const widths = [25, 25, 199, 33, 21, 18, 19, 30, 20, 15, 28, 26, 28, 26, 26, 28, 37, 43, 61, 55, 46, 23, 23, 26, 24, 27, 31];
const total = widths.reduce((a, b) => a + b);
const cols = document.getElementById('cols');
widths.forEach(w => {
    const col = document.createElement('col');
    col.style.width = (w / total * 100) + '%';
    cols.appendChild(col);
});

const rows = document.getElementById('rows');
const first = rows.rows[0];
while (first.cells.length < widths.length) first.insertCell();
for (let r = 0; r < 14; r++) {
    const row = rows.insertRow();
    widths.forEach(() => row.insertCell());
}
```
